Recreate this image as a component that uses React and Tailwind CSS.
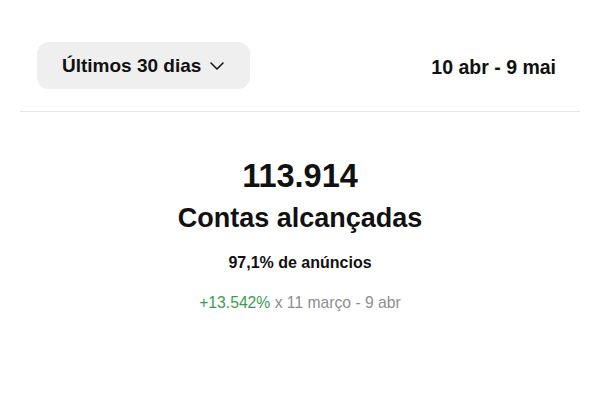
import React from 'react';

const Chevron = () => (
  <svg width="14" height="8" viewBox="0 0 14 8" fill="none" className="text-[#1a1a1a]">
    <polyline points="1,1 7,7 13,1" stroke="currentColor" strokeWidth="1.6" strokeLinecap="round" strokeLinejoin="round" />
  </svg>
);

const App = () => {
  return (
    <div className="w-[600px] h-[400px] bg-white text-[#111] overflow-hidden" style={{ fontFamily: '"Liberation Sans", Arial, sans-serif' }}>
      <div className="flex items-center justify-between pl-[37px] pr-[44px] pt-[42px]">
        <button className="flex items-center gap-[9px] h-[47px] pl-[25px] pr-[26px] rounded-[12px] bg-[#efefef]">
          <span className="text-[19px] font-bold leading-none">Últimos 30 dias</span>
          <Chevron />
        </button>
        <span className="text-[19.5px] font-bold leading-none mt-[4px]">10 abr - 9 mai</span>
      </div>

      <div className="mx-[20px] mt-[22px] h-px bg-[#e6e6e6]" />

      <div className="flex flex-col items-center mt-[48px]">
        <div className="text-[32.5px] font-bold leading-none">113.914</div>
        <div className="text-[27px] font-bold leading-none mt-[12px]">Contas alcançadas</div>
        <div className="text-[16px] font-semibold leading-none mt-[23px]">97,1% de anúncios</div>
        <div className="text-[15.7px] leading-none mt-[24px]">
          <span className="text-[#3a9d4e]">+13.542%</span>
          <span className="text-[#8e8e8e]"> x 11 março - 9 abr</span>
        </div>
      </div>
    </div>
  );
};

export default App;
